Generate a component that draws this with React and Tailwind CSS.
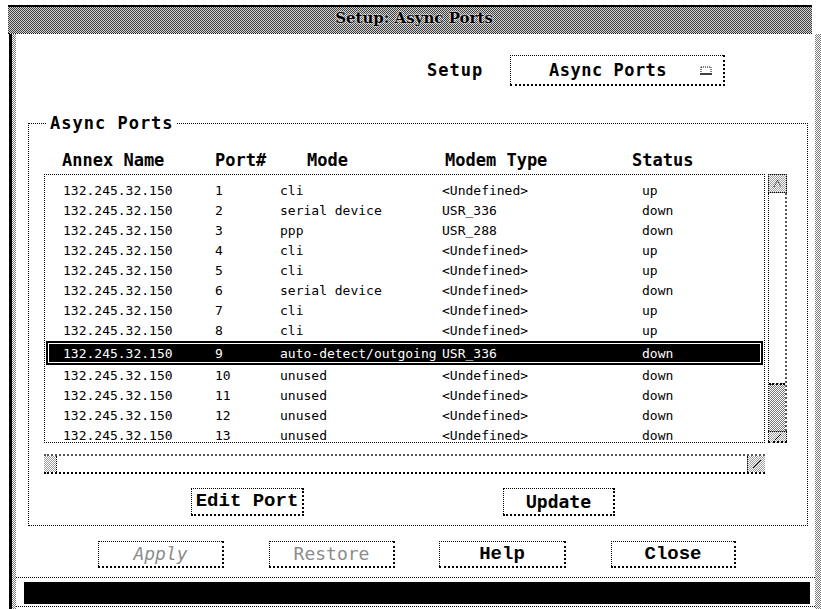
import React from "react";

const ports = [
  ["1", "cli", "<Undefined>", "up"],
  ["2", "serial device", "USR_336", "down"],
  ["3", "ppp", "USR_288", "down"],
  ["4", "cli", "<Undefined>", "up"],
  ["5", "cli", "<Undefined>", "up"],
  ["6", "serial device", "<Undefined>", "down"],
  ["7", "cli", "<Undefined>", "up"],
  ["8", "cli", "<Undefined>", "up"],
  ["9", "auto-detect/outgoing", "USR_336", "down"],
  ["10", "unused", "<Undefined>", "down"],
  ["11", "unused", "<Undefined>", "down"],
  ["12", "unused", "<Undefined>", "down"],
  ["13", "unused", "<Undefined>", "down"],
];

const SELECTED = "9";

function PortRow({ port, mode, modem, status }) {
  const cells = (
    <>
      <span className="w-[152px] shrink-0">132.245.32.150</span>
      <span className="w-[65px] shrink-0">{port}</span>
      <span className="w-[162px] shrink-0 whitespace-nowrap">{mode}</span>
      <span className="w-[200px] shrink-0">{modem}</span>
      <span>{status}</span>
    </>
  );
  if (port === SELECTED) {
    return (
      <div className="mx-[1px] mt-[1px] h-[24px] bg-black p-[2px] shrink-0">
        <div className="h-full border border-white flex items-center pl-[14px] text-white">
          {cells}
        </div>
      </div>
    );
  }
  return (
    <div className="h-[20px] flex items-center pl-[18px] shrink-0 text-black">{cells}</div>
  );
}

function ComboGlyph() {
  return (
    <svg width="12" height="9" viewBox="0 0 12 9" className="shrink-0">
      <path d="M1 1h10" stroke="#000" strokeWidth="1" strokeDasharray="1 1" />
      <path d="M1 1v6M11 1v6" stroke="#000" strokeWidth="1" strokeDasharray="1 1" />
      <path d="M0 8h12" stroke="#000" strokeWidth="1.5" />
    </svg>
  );
}

function Button({ children, className = "", textClass = "" }) {
  return (
    <div
      className={
        "flex items-center justify-center border border-dotted border-black border-b-2 border-r-2 shrink-0 " +
        className
      }
    >
      <span className={"leading-none " + textClass}>{children}</span>
    </div>
  );
}

const dither =
  "bg-[repeating-conic-gradient(#3c3c3c_0%_25%,#d4d4d4_0%_50%)] bg-[length:2px_2px]";
const ditherLight =
  "bg-[repeating-conic-gradient(#7a7a7a_0%_25%,#ffffff_0%_50%)] bg-[length:2px_2px]";
const ditherSoft =
  "bg-[repeating-conic-gradient(#a0a0a0_0%_25%,#ffffff_0%_50%)] bg-[length:2px_2px]";

export default function App() {
  return (
    <div className="w-[821px] h-[609px] bg-white overflow-hidden flex flex-col font-['DejaVu_Sans_Mono',monospace] text-black">
      <div className="h-[5px] shrink-0" />

      {/* window title */}
      <div
        className={
          "ml-[8px] w-[804px] h-[28px] shrink-0 border-t-2 border-black flex items-center justify-center pb-[3px] " +
          dither
        }
      >
        <span className="ml-[8px] font-['DejaVu_Serif',serif] font-bold text-[15px] leading-none text-black [text-shadow:0_0_2px_#fff,0_0_2px_#fff]">
          Setup: Async Ports
        </span>
      </div>
      <div className="ml-[8px] w-[804px] border-t border-dotted border-black shrink-0" />

      <div className="flex flex-1 min-h-0">
        <div className="w-[9px] shrink-0" />
        <div className="w-[3px] bg-black shrink-0" />
        <div className={"w-[4px] shrink-0 " + ditherLight} />

        {/* dialog body */}
        <div className="flex-1 flex flex-col min-w-0">
          <div className="mt-[21px] h-[31px] flex items-center shrink-0">
            <span className="ml-[411px] w-[83px] text-[17px] font-bold tracking-[1px] leading-none">
              Setup
            </span>
            <div className="w-[215px] h-[31px] border border-dotted border-black border-b-2 border-r-2 flex items-center pl-[38px]">
              <span className="text-[17px] font-bold tracking-[0.5px] leading-none w-[151px]">
                Async Ports
              </span>
              <ComboGlyph />
            </div>
          </div>

          <fieldset className="ml-[12px] mt-[27px] w-[780px] border border-dotted border-black px-[15px] pb-[9px] shrink-0">
            <legend className="ml-[3px] px-[3px] text-[17px] font-bold tracking-[1px] leading-[20px]">
              Async Ports
            </legend>

            <div className="mt-[18px] h-[18px] flex items-center text-[17px] font-bold leading-none pl-[18px]">
              <span className="w-[153px] shrink-0">Annex Name</span>
              <span className="w-[92px] shrink-0">Port#</span>
              <span className="w-[138px] shrink-0">Mode</span>
              <span className="w-[187px] shrink-0">Modem Type</span>
              <span>Status</span>
            </div>

            <div className="mt-[5px] flex gap-[3px]">
              <div className="w-[721px] h-[269px] border border-dotted border-black overflow-hidden flex flex-col pt-[5px] text-[13px] leading-none">
                {ports.map(([port, mode, modem, status]) => (
                  <PortRow key={port} port={port} mode={mode} modem={modem} status={status} />
                ))}
              </div>

              {/* vertical scroll bar */}
              <div className="w-[19px] h-[269px] flex flex-col">
                <div className={"h-[19px] border border-dotted border-black shrink-0 flex items-center justify-center " + ditherSoft}>
                  <svg width="9" height="9" viewBox="0 0 9 9">
                    <path d="M1 8L4.5 1L8 8" fill="none" stroke="#000" strokeWidth="1" strokeDasharray="1 1" />
                  </svg>
                </div>
                <div className="flex-1 border-l border-dotted border-black border-r-2 border-r-[#555] flex flex-col">
                  <div className="flex-1" />
                  <div className={"h-[48px] border-t-2 border-dotted border-black " + ditherLight} />
                </div>
                <div className={"h-[12px] border border-dotted border-black border-b-2 shrink-0 flex items-center justify-center " + ditherSoft}>
                  <svg width="8" height="8" viewBox="0 0 8 8">
                    <path d="M1 7L7 1" stroke="#000" strokeWidth="1" />
                  </svg>
                </div>
              </div>
            </div>

            {/* horizontal scroll bar */}
            <div className="mt-[11px] w-[721px] h-[20px] flex border-t-2 border-dotted border-[#555] border-b-2 border-b-black">
              <div className={"w-[13px] shrink-0 border-r border-dotted border-black " + ditherSoft} />
              <div className="flex-1" />
              <div className={"w-[18px] shrink-0 border-l border-dotted border-black flex items-center justify-center " + ditherSoft}>
                <svg width="10" height="10" viewBox="0 0 10 10">
                  <path d="M1 9L9 1" stroke="#000" strokeWidth="1" />
                </svg>
              </div>
            </div>

            <div className="mt-[14px] flex">
              <Button className="ml-[147px] w-[113px] h-[28px]" textClass="font-['Liberation_Mono',monospace] font-bold text-[19px]">
                Edit Port
              </Button>
              <Button className="ml-[199px] w-[112px] h-[28px]" textClass="font-bold text-[18px]">
                Update
              </Button>
            </div>
          </fieldset>

          <div className="mt-[15px] flex pl-[82px] shrink-0">
            <Button className="w-[126px] h-[27px]" textClass="text-[18px] italic text-[#8c8c8c]">
              Apply
            </Button>
            <Button className="ml-[45px] w-[126px] h-[27px]" textClass="text-[18px] text-[#8c8c8c]">
              Restore
            </Button>
            <Button className="ml-[44px] w-[127px] h-[27px]" textClass="font-['Liberation_Mono',monospace] font-bold text-[19px]">
              Help
            </Button>
            <Button className="ml-[45px] w-[125px] h-[27px]" textClass="font-['Liberation_Mono',monospace] font-bold text-[19px]">
              Close
            </Button>
          </div>

          <div className="mt-[9px] border-t border-dotted border-black shrink-0" />
          <div className="mt-[4px] ml-[8px] w-[786px] h-[22px] bg-black shrink-0" />
          <div className="mt-[2px] border-t border-dotted border-black shrink-0" />
        </div>

        <div className={"w-[6px] shrink-0 " + ditherLight} />
      </div>
    </div>
  );
}
